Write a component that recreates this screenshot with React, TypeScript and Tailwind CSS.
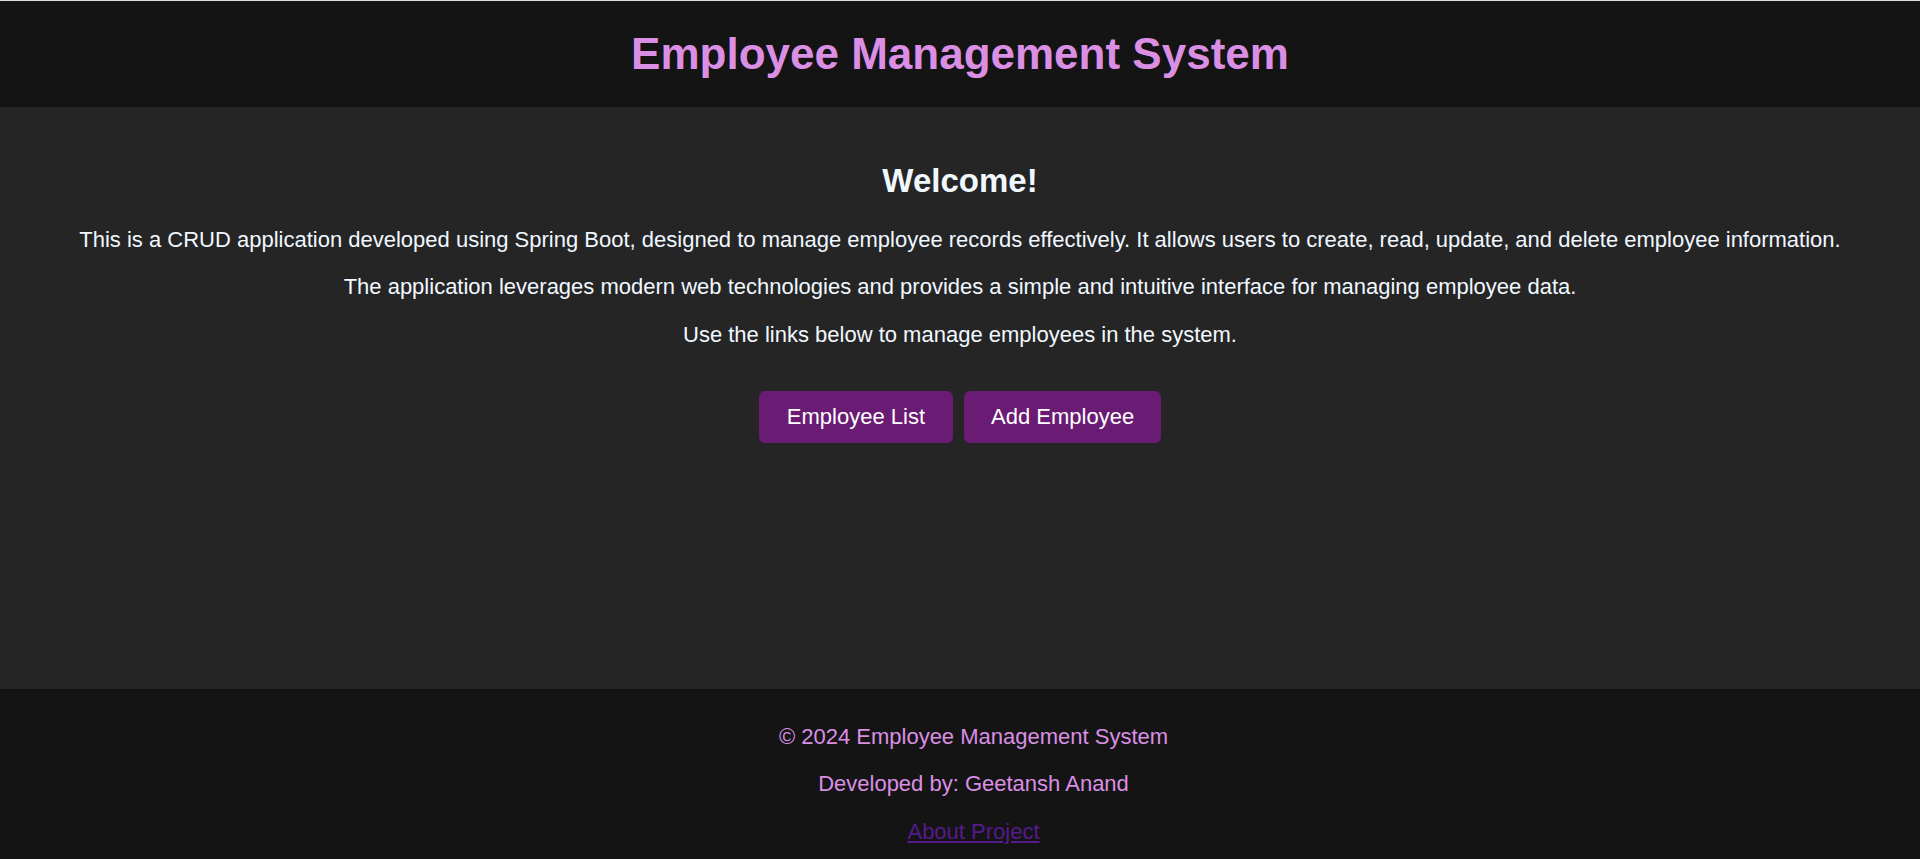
export default function App() {
  return (
    <div
      className="min-h-screen bg-[#141414] border-t border-[#dcdcdc]"
      style={{ fontFamily: '"Liberation Sans", Arial, sans-serif' }}
    >
      {/* Header */}
      <header className="h-[106px] flex items-center justify-center bg-[#141414]">
        <h1 className="text-[44px] font-bold text-[#da8fe4] leading-[1.15]">
          Employee Management System
        </h1>
      </header>

      {/* Main */}
      <main className="h-[582px] bg-[#262526] pt-[55px] text-center text-[#f0f8ff]">
        <h2 className="text-[33px] font-bold leading-[1.15]">Welcome!</h2>
        <div className="mt-[27px] flex flex-col gap-[22px] text-[22px] leading-[1.15]">
          <p>
            This is a CRUD application developed using Spring Boot, designed to
            manage employee records effectively. It allows users to create, read,
            update, and delete employee information.
          </p>
          <p>
            The application leverages modern web technologies and provides a
            simple and intuitive interface for managing employee data.
          </p>
          <p>Use the links below to manage employees in the system.</p>
        </div>
        <div className="mt-[44px] flex justify-center gap-[11px]">
          <a
            href="#"
            className="h-[52px] px-[28px] flex items-center rounded-md bg-[#6a1b73] text-white text-[22px]"
          >
            Employee List
          </a>
          <a
            href="#"
            className="h-[52px] px-[27px] flex items-center rounded-md bg-[#6a1b73] text-white text-[22px]"
          >
            Add Employee
          </a>
        </div>
      </main>

      {/* Footer */}
      <footer className="pt-[35px] pb-[35px] pl-[27px] flex flex-col items-center gap-[22px] text-[22px] leading-[1.15] text-[#da8fe4]">
        <p>© 2024 Employee Management System</p>
        <p>Developed by: Geetansh Anand</p>
        <a href="#" className="text-[#551a8b] underline">
          About Project
        </a>
      </footer>
    </div>
  );
}
